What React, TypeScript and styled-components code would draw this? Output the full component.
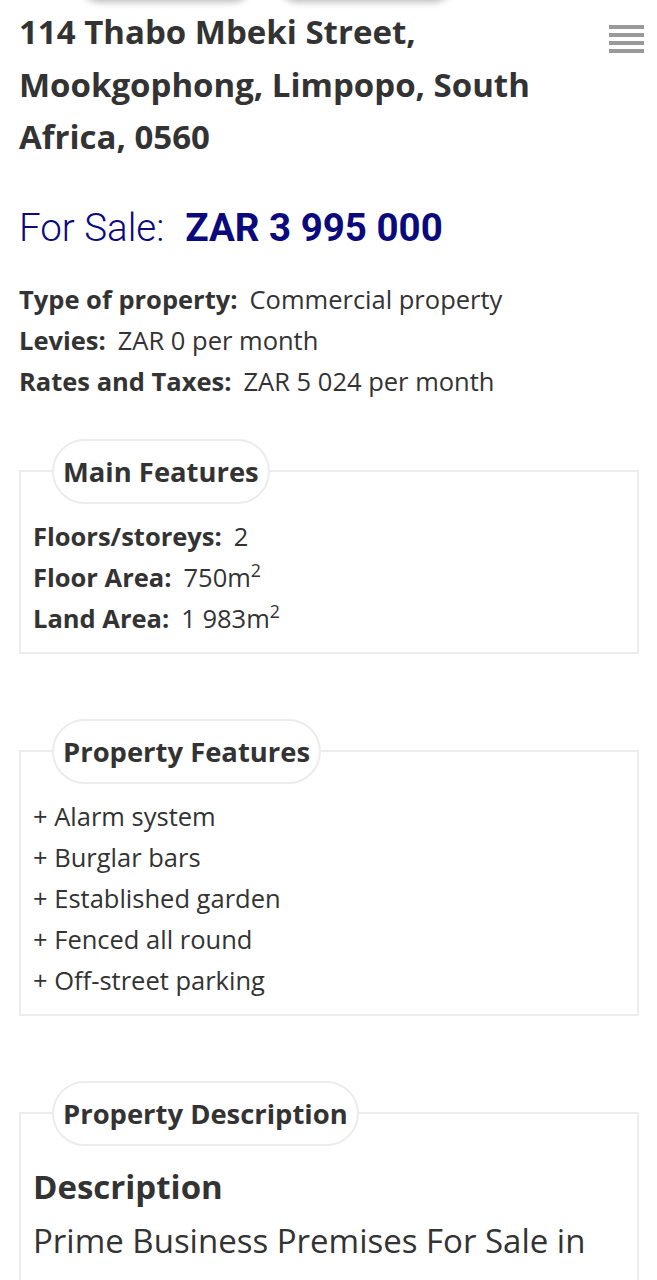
import * as React from "react";
import styled, { createGlobalStyle } from "styled-components";

const GlobalStyle = createGlobalStyle`
  html, body {
    margin: 0;
    padding: 0;
    background: #fff;
  }
  body {
    font-family: "Open Sans", "Noto Sans", sans-serif;
    color: #333;
  }
`;

const Page = styled.div`
  width: 657px;
  overflow: hidden;
`;

const TopTabs = styled.div`
  display: flex;
  gap: 26px;
  padding-left: 80px;
  margin-top: -40px;
  height: 40px;
`;

const Tab = styled.div<{ $w: number }>`
  width: ${(p) => p.$w}px;
  height: 40px;
  border-radius: 0 0 20px 20px;
  background: #fff;
  box-shadow: 0 2px 7px rgba(0, 0, 0, 0.28);
`;

const Header = styled.div`
  display: flex;
  justify-content: space-between;
  align-items: flex-start;
  padding: 6px 13px 0 19px;
`;

const Title = styled.h1`
  margin: 0;
  font-size: 33px;
  line-height: 52.5px;
  font-weight: 700;
  color: #333;
  width: 560px;
`;

const Burger = styled.div`
  display: flex;
  flex-direction: column;
  gap: 4px;
  margin-top: 19px;
`;

const BurgerBar = styled.span`
  display: block;
  width: 35px;
  height: 4px;
  background: #9a9a9a;
`;

const Price = styled.div`
  margin: 40px 0 0 19px;
  font-family: Roboto, "Liberation Sans", sans-serif;
  font-size: 38.5px;
  line-height: 48px;
  color: #0a0a7d;
  font-weight: 300;
`;

const PriceValue = styled.strong`
  font-weight: 700;
  margin-left: 21px;
`;

const InfoList = styled.div`
  margin: 27px 0 0 19px;
`;

const Row = styled.div`
  font-size: 25.5px;
  line-height: 41px;
  color: #333;
`;

const Label = styled.b`
  font-weight: 700;
  margin-right: 12px;
`;

const Sup = styled.sup`
  font-size: 0.7em;
  line-height: 0;
  vertical-align: 0.55em;
`;

const Box = styled.fieldset<{ $top: number }>`
  margin: ${(p) => p.$top}px 18px 0 19px;
  padding: 0 12px 13px 12px;
  border: 2px solid #ececec;
  min-width: 0;
`;

const Legend = styled.legend`
  margin-left: 19px;
  padding: 0 9px;
  height: 65px;
  line-height: 61px;
  border: 2px solid #ececec;
  border-radius: 33px;
  font-size: 27.4px;
  font-weight: 700;
  color: #333;
  box-sizing: border-box;
`;

const Body = styled.div`
  padding-top: 12px;
`;

const DescHead = styled.h2`
  margin: 0;
  font-size: 33px;
  line-height: 54px;
  font-weight: 700;
  color: #333;
  padding-top: 2px;
`;

const DescText = styled.p`
  margin: 0;
  font-size: 33px;
  line-height: 54px;
  color: #333;
`;

const features = [
  "Alarm system",
  "Burglar bars",
  "Established garden",
  "Fenced all round",
  "Off-street parking",
];

export default function App() {
  return (
    <Page>
      <GlobalStyle />
      <TopTabs>
        <Tab $w={172} />
        <Tab $w={175} />
      </TopTabs>
      <Header>
        <Title>114 Thabo Mbeki Street, Mookgophong, Limpopo, South Africa, 0560</Title>
        <Burger>
          <BurgerBar />
          <BurgerBar />
          <BurgerBar />
          <BurgerBar />
        </Burger>
      </Header>

      <Price>
        For Sale:<PriceValue>ZAR 3 995 000</PriceValue>
      </Price>

      <InfoList>
        <Row><Label>Type of property:</Label>Commercial property</Row>
        <Row><Label>Levies:</Label>ZAR 0 per month</Row>
        <Row><Label>Rates and Taxes:</Label>ZAR 5 024 per month</Row>
      </InfoList>

      <Box $top={37}>
        <Legend>Main Features</Legend>
        <Body>
          <Row><Label>Floors/storeys:</Label>2</Row>
          <Row><Label>Floor Area:</Label>750m<Sup>2</Sup></Row>
          <Row><Label>Land Area:</Label>1 983m<Sup>2</Sup></Row>
        </Body>
      </Box>

      <Box $top={65}>
        <Legend>Property Features</Legend>
        <Body>
          {features.map((f) => (
            <Row key={f}>+ {f}</Row>
          ))}
        </Body>
      </Box>

      <Box $top={65}>
        <Legend>Property Description</Legend>
        <Body>
          <DescHead>Description</DescHead>
          <DescText>Prime Business Premises For Sale in</DescText>
        </Body>
      </Box>
    </Page>
  );
}
